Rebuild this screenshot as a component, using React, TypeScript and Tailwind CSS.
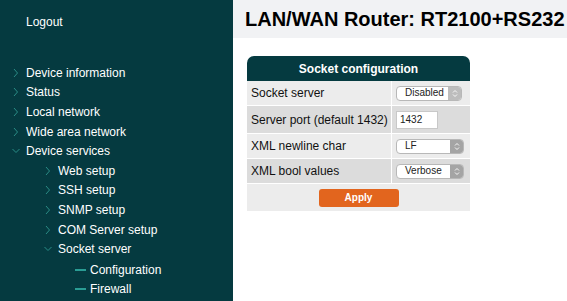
import React from "react";

const font = { fontFamily: '"Liberation Sans", Arial, sans-serif' };

function Chevron({ open = false }: { open?: boolean }) {
  return (
    <svg width="8" height="10" viewBox="0 0 8 10" className="shrink-0">
      {open ? (
        <path d="M0.5 3 L4 6.5 L7.5 3" fill="none" stroke="#2a8c86" strokeWidth="1" />
      ) : (
        <path d="M2 1 L5.5 5 L2 9" fill="none" stroke="#2a8c86" strokeWidth="1" />
      )}
    </svg>
  );
}

function MenuItem({
  label,
  level,
  kind,
}: {
  label: string;
  level: number;
  kind: "closed" | "open" | "dash";
}) {
  const pad = level === 0 ? "pl-[12px]" : level === 1 ? "pl-[44px]" : "pl-[75px]";
  return (
    <div className={`flex items-center h-[19.6px] ${pad}`}>
      {kind === "dash" ? (
        <span className="w-[11px] h-[2px] bg-[#2a9c94] mr-[4px]" />
      ) : (
        <span className="w-[14px] flex items-center">
          <Chevron open={kind === "open"} />
        </span>
      )}
      <span className="text-[12px] text-white">{label}</span>
    </div>
  );
}

function Select({ value, width, arrow }: { value: string; width: string; arrow: string }) {
  return (
    <div
      className={`flex items-center justify-between h-[15px] ${width} bg-white border border-[#b8b8b8] rounded-[4px] overflow-hidden`}
    >
      <span className="text-[10px] text-[#222] pl-[8px] leading-none">{value}</span>
      <span className={`w-[13px] h-full ${arrow} flex items-center justify-center`}>
        <svg width="6" height="9" viewBox="0 0 6 9">
          <path d="M1 3.5 L3 1.5 L5 3.5 M1 5.5 L3 7.5 L5 5.5" fill="none" stroke="#fff" strokeWidth="0.9" />
        </svg>
      </span>
    </div>
  );
}

export default function App() {
  const rows: { label: string; bg: string; h: string; control: React.ReactNode }[] = [
    {
      label: "Socket server",
      bg: "bg-[#ececec]",
      h: "h-[25px]",
      control: <Select value="Disabled" width="w-[66px]" arrow="bg-[#bdbdbd]" />,
    },
    {
      label: "Server port (default 1432)",
      bg: "bg-[#dcdcdc]",
      h: "h-[28px]",
      control: (
        <div className="w-[42px] h-[18px] bg-white border border-[#c8c8c8] flex items-center pl-[3px] text-[10px] text-[#222]">
          1432
        </div>
      ),
    },
    {
      label: "XML newline char",
      bg: "bg-[#ececec]",
      h: "h-[25px]",
      control: <Select value="LF" width="w-[68px]" arrow="bg-[#a4a4a4]" />,
    },
    {
      label: "XML bool values",
      bg: "bg-[#dcdcdc]",
      h: "h-[25px]",
      control: <Select value="Verbose" width="w-[68px]" arrow="bg-[#a4a4a4]" />,
    },
  ];

  return (
    <div className="flex w-[567px] h-[301px] overflow-hidden bg-white" style={font}>
      <aside className="w-[233px] h-full bg-[#053a40] shrink-0">
        <div className="pl-[26px] pt-[13px] text-[12px] text-white h-[63px]">Logout</div>
        <div>
          <MenuItem label="Device information" level={0} kind="closed" />
          <MenuItem label="Status" level={0} kind="closed" />
          <MenuItem label="Local network" level={0} kind="closed" />
          <MenuItem label="Wide area network" level={0} kind="closed" />
          <MenuItem label="Device services" level={0} kind="open" />
          <MenuItem label="Web setup" level={1} kind="closed" />
          <MenuItem label="SSH setup" level={1} kind="closed" />
          <MenuItem label="SNMP setup" level={1} kind="closed" />
          <MenuItem label="COM Server setup" level={1} kind="closed" />
          <MenuItem label="Socket server" level={1} kind="open" />
          <div className="h-[1px]" />
          <MenuItem label="Configuration" level={2} kind="dash" />
          <MenuItem label="Firewall" level={2} kind="dash" />
        </div>
      </aside>
      <main className="flex-1 flex flex-col">
        <div className="h-[38px] bg-[#f1f2f4] flex items-center pl-[12px]">
          <h1 className="text-[20px] font-bold text-black leading-none">LAN/WAN Router: RT2100+RS232</h1>
        </div>
        <div className="pl-[14px] pt-[18px]">
          <div className="w-[223px]">
            <div className="h-[25px] bg-[#053a40] rounded-t-[7px] flex items-center justify-center text-white text-[12px] font-bold">
              Socket configuration
            </div>
            {rows.map((r) => (
              <div key={r.label} className={`flex ${r.h} border-b border-white`}>
                <div
                  className={`w-[145px] ${r.bg} border-r border-white flex items-center pl-[4px] text-[12px] text-[#111] whitespace-nowrap`}
                >
                  {r.label}
                </div>
                <div className={`flex-1 ${r.bg} flex items-center pl-[4px]`}>{r.control}</div>
              </div>
            ))}
            <div className="h-[27px] bg-[#ececec] flex items-center justify-center">
              <button className="w-[80px] h-[18px] bg-[#e2651e] rounded-[3px] text-white text-[10px] font-bold">
                Apply
              </button>
            </div>
          </div>
        </div>
      </main>
    </div>
  );
}
